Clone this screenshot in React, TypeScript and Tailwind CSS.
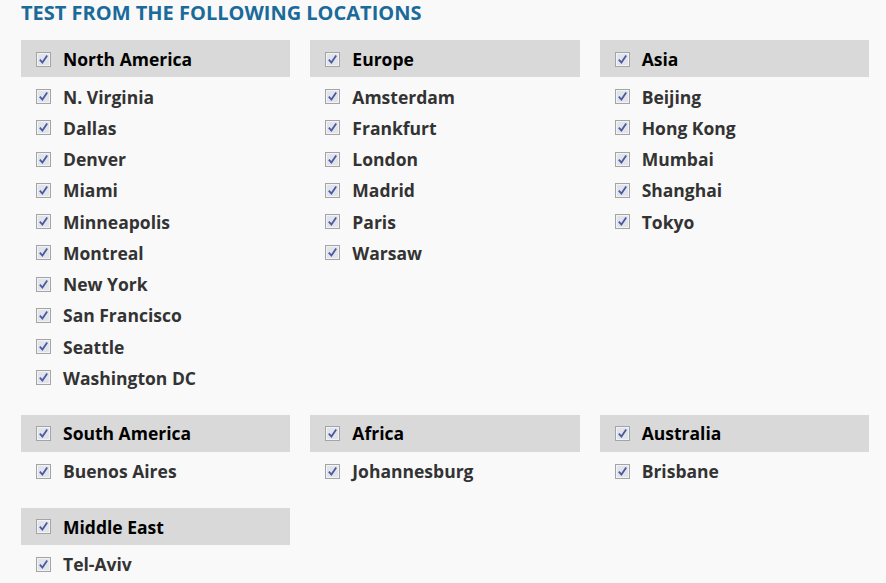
const regions = [
  {
    name: "North America",
    cities: [
      "N. Virginia",
      "Dallas",
      "Denver",
      "Miami",
      "Minneapolis",
      "Montreal",
      "New York",
      "San Francisco",
      "Seattle",
      "Washington DC",
    ],
  },
  { name: "Europe", cities: ["Amsterdam", "Frankfurt", "London", "Madrid", "Paris", "Warsaw"] },
  { name: "Asia", cities: ["Beijing", "Hong Kong", "Mumbai", "Shanghai", "Tokyo"] },
  { name: "South America", cities: ["Buenos Aires"] },
  { name: "Africa", cities: ["Johannesburg"] },
  { name: "Australia", cities: ["Brisbane"] },
  { name: "Middle East", cities: ["Tel-Aviv"] },
];

function Check() {
  return (
    <svg width="15" height="15" viewBox="0 0 15 15" className="shrink-0">
      <rect x="0.5" y="0.5" width="14" height="14" fill="#e2e4ec" stroke="#a4a4a4" />
      <rect x="1.5" y="1.5" width="12" height="12" fill="none" stroke="#f2f3f7" />
      <path d="M3.8 7.6 L6.4 10.6 L11.2 3.4" fill="none" stroke="#4b5a9e" strokeWidth="1.8" />
    </svg>
  );
}

function Region({ name, cities }: { name: string; cities: string[] }) {
  return (
    <div>
      <label className="flex h-[37px] items-center gap-[12px] bg-[#d9d9d9] pl-[15px] pt-[1px] text-[17.5px] font-bold text-black">
        <Check />
        {name}
      </label>
      <ul className="pt-[4px]">
        {cities.map((c) => (
          <li key={c} className="flex h-[31.25px] items-center gap-[12px] pl-[15px] text-[17.5px] font-bold text-[#333]">
            <Check />
            {c}
          </li>
        ))}
      </ul>
    </div>
  );
}

export default function App() {
  return (
    <div className="min-h-[583px] bg-[#f9f9f9] px-[21px] pt-[2px] font-['Open_Sans',sans-serif]">
      <h2 className="text-[20px] font-bold uppercase leading-[22px] text-[#1a6a9a]">
        Test from the following locations
      </h2>
      <div className="mt-[16px] grid w-[848px] grid-cols-3 gap-x-[20px] gap-y-[21px]">
        {regions.map((r) => (
          <Region key={r.name} {...r} />
        ))}
      </div>
    </div>
  );
}
